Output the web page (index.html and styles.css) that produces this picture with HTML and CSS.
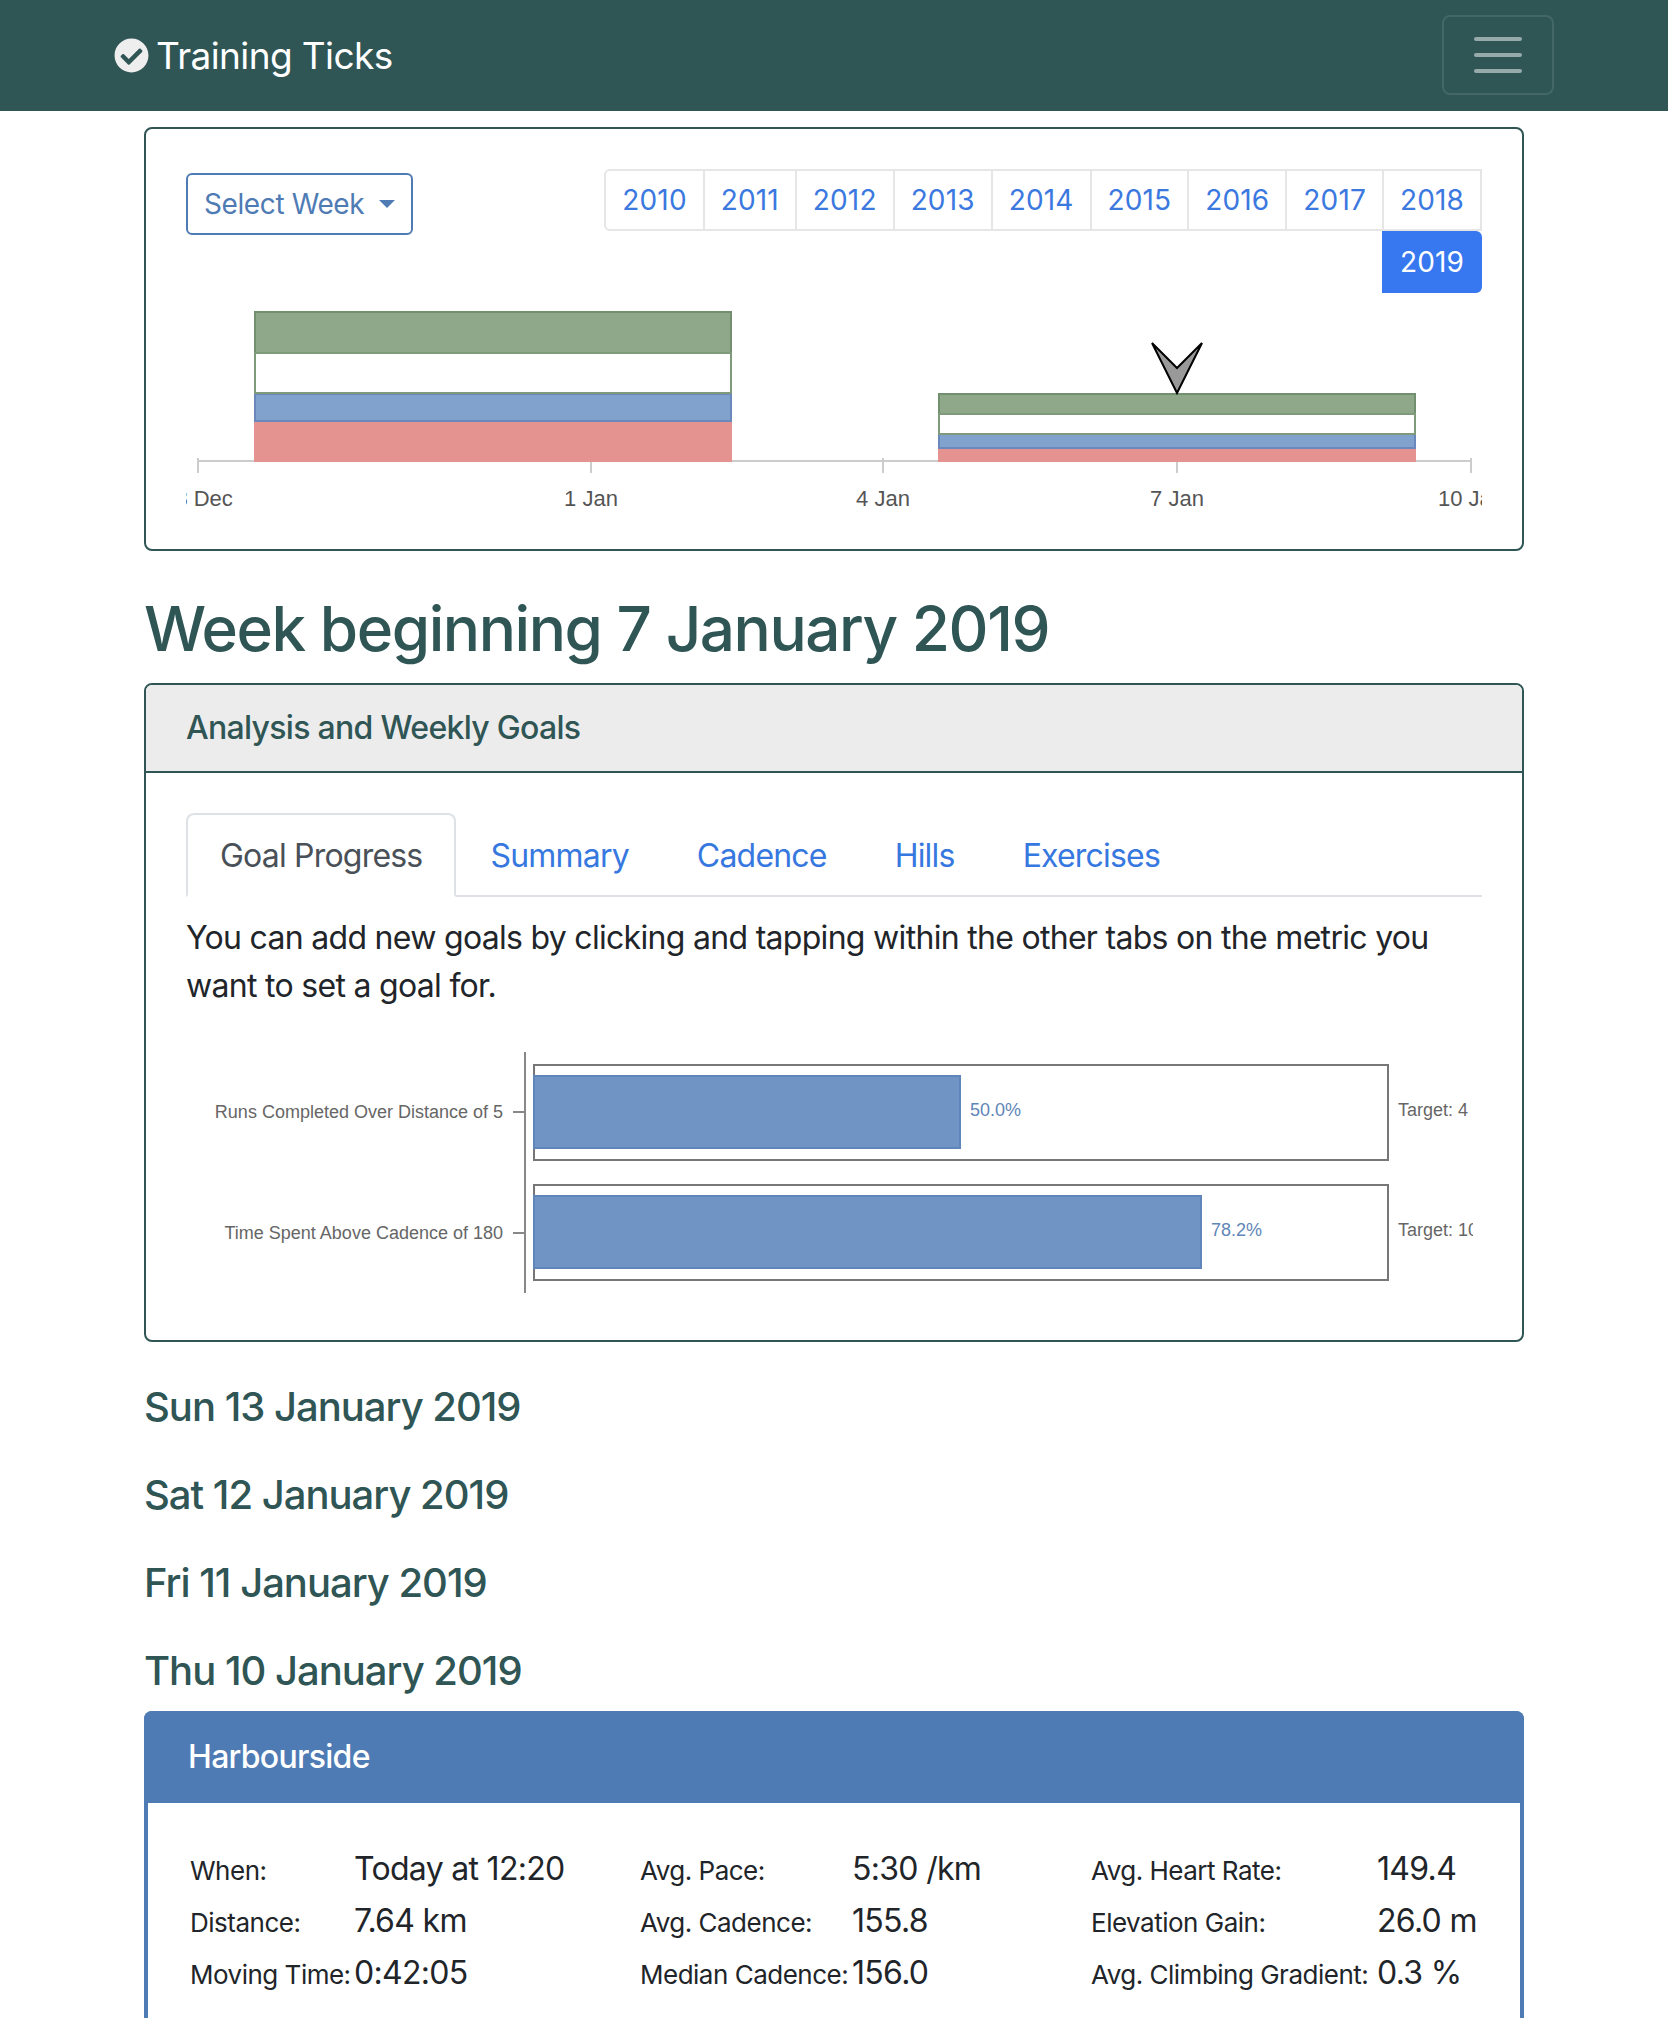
FILE: index.html
```html
<!DOCTYPE html>
<html lang="en">
<head>
  <meta charset="UTF-8">
  <meta name="viewport" content="width=device-width, initial-scale=1.0">
  <title>Training Ticks</title>
  <link rel="stylesheet" href="styles.css">
</head>
<body>

<nav class="navbar">
  <a class="brand" href="#">
    <svg class="brand-icon" viewBox="0 0 512 512"><path d="M504 256c0 136.967-111.033 248-248 248S8 392.967 8 256 119.033 8 256 8s248 111.033 248 248zM227.314 387.314l184-184c6.248-6.248 6.248-16.379 0-22.627l-22.627-22.627c-6.248-6.249-16.379-6.249-22.628 0L216 308.118l-70.059-70.059c-6.248-6.248-16.379-6.248-22.628 0l-22.627 22.627c-6.248 6.248-6.248 16.379 0 22.627l104 104c6.249 6.25 16.379 6.25 22.628.001z"/></svg>
    Training Ticks
  </a>
  <button class="toggler"><span></span><span></span><span></span></button>
</nav>

<div class="container">

  <div class="card week-card">
    <div class="week-controls">
      <button class="select-week">Select Week<i class="caret"></i></button>
      <div class="years">
        <a class="year first">2010</a>
        <a class="year">2011</a>
        <a class="year">2012</a>
        <a class="year">2013</a>
        <a class="year">2014</a>
        <a class="year">2015</a>
        <a class="year">2016</a>
        <a class="year">2017</a>
        <a class="year">2018</a>
        <a class="year active">2019</a>
      </div>
    </div>
    <svg class="week-chart" viewBox="186 293 1296 217">
      <g class="axis">
        <path d="M198 461H1471"/>
        <path d="M198 458V473M591 458V473M883 458V473M1177 458V473M1471 458V473"/>
      </g>
      <g class="bar-red"><rect x="255" y="422" width="476" height="39"/><rect x="939" y="449" width="476" height="12"/></g>
      <g class="bar-blue"><rect x="255" y="394" width="476" height="27"/><rect x="939" y="434" width="476" height="14"/></g>
      <g class="bar-green"><rect x="255" y="312" width="476" height="41"/><rect x="939" y="394" width="476" height="20"/></g>
      <rect class="bar-white" x="255" y="353" width="476" height="40"/>
      <rect class="bar-white" x="939" y="414" width="476" height="20"/>
      <path class="marker" d="M1152 343L1177 368L1202 343L1177 393Z"/>
      <g class="axis-labels">
        <text x="198" y="506">28 Dec</text>
        <text x="591" y="506">1 Jan</text>
        <text x="883" y="506">4 Jan</text>
        <text x="1177" y="506">7 Jan</text>
        <text x="1471" y="506">10 Jan</text>
      </g>
    </svg>
  </div>

  <h1 class="week-title">Week beginning 7 January 2019</h1>

  <div class="card">
    <div class="card-header">Analysis and Weekly Goals</div>
    <div class="card-body">
      <ul class="tabs">
        <li class="tab active">Goal Progress</li>
        <li class="tab">Summary</li>
        <li class="tab">Cadence</li>
        <li class="tab">Hills</li>
        <li class="tab">Exercises</li>
      </ul>
      <p class="goal-text">You can add new goals by clicking and tapping within the other tabs on the metric you want to set a goal for.</p>
      <svg class="goal-chart" viewBox="186 1042 1287 257">
        <path class="goal-axis" d="M525 1052V1293M513 1112H526M513 1233H526"/>
        <rect class="goal-box" x="534" y="1065" width="854" height="95"/>
        <rect class="goal-box" x="534" y="1185" width="854" height="95"/>
        <rect class="goal-fill" x="534" y="1076" width="426" height="72"/>
        <rect class="goal-fill" x="534" y="1196" width="667" height="72"/>
        <g class="goal-labels">
          <text x="503" y="1118">Runs Completed Over Distance of 5</text>
          <text x="503" y="1239">Time Spent Above Cadence of 180</text>
        </g>
        <g class="goal-percent">
          <text x="970" y="1116">50.0%</text>
          <text x="1211" y="1236">78.2%</text>
        </g>
        <g class="goal-target">
          <text x="1398" y="1116">Target: 4</text>
          <text x="1398" y="1236">Target: 10</text>
        </g>
      </svg>
    </div>
  </div>

  <h5 class="day first-day">Sun 13 January 2019</h5>
  <h5 class="day">Sat 12 January 2019</h5>
  <h5 class="day">Fri 11 January 2019</h5>
  <h5 class="day last-day">Thu 10 January 2019</h5>

  <div class="activity">
    <div class="activity-header">Harbourside</div>
    <div class="activity-body">
      <table class="stats stats-when">
        <tr><td class="label">When:</td><td class="value">Today at 12:20</td></tr>
        <tr><td class="label">Distance:</td><td class="value">7.64 km</td></tr>
        <tr><td class="label">Moving Time:</td><td class="value">0:42:05</td></tr>
      </table>
      <table class="stats stats-pace">
        <tr><td class="label">Avg. Pace:</td><td class="value">5:30 /km</td></tr>
        <tr><td class="label">Avg. Cadence:</td><td class="value">155.8</td></tr>
        <tr><td class="label">Median Cadence:</td><td class="value">156.0</td></tr>
      </table>
      <table class="stats stats-effort">
        <tr><td class="label">Avg. Heart Rate:</td><td class="value">149.4</td></tr>
        <tr><td class="label">Elevation Gain:</td><td class="value">26.0 m</td></tr>
        <tr><td class="label">Avg. Climbing Gradient:</td><td class="value">0.3 %</td></tr>
      </table>
    </div>
  </div>

</div>

</body>
</html>
```

FILE: styles.css
```css
html, body {
  margin: 0;
  padding: 0;
  height: 2018px;
  overflow: hidden;
}
body {
  font-family: Inter, "Noto Sans", sans-serif;
  font-size: 32px;
  line-height: 48px;
  letter-spacing: -0.7px;
  color: #212529;
  background-color: #fff;
}

/* navbar */
.navbar {
  display: flex;
  justify-content: space-between;
  align-items: center;
  height: 111px;
  padding: 0 114px;
  background-color: #2f5555;
}
.brand {
  display: flex;
  align-items: center;
  gap: 7px;
  font-size: 37px;
  letter-spacing: -0.6px;
  color: #fff;
  text-decoration: none;
}
.brand-icon {
  width: 35px;
  height: 35px;
  fill: #eee;
}
.toggler {
  display: flex;
  flex-direction: column;
  align-items: center;
  justify-content: center;
  gap: 12px;
  width: 112px;
  height: 80px;
  margin-top: -1px;
  padding: 0;
  background: none;
  border: 2px solid rgba(255, 255, 255, 0.1);
  border-radius: 8px;
}
.toggler span {
  width: 48px;
  height: 4px;
  border-radius: 2px;
  background-color: rgba(255, 255, 255, 0.5);
}

.container {
  width: 1380px;
  margin: 16px auto 0;
}

/* cards */
.card {
  border: 2px solid #2f5555;
  border-radius: 8px;
}
.week-card {
  padding: 40px 40px 39px;
}
.week-controls {
  display: flex;
  justify-content: space-between;
  align-items: flex-start;
}
.select-week {
  display: flex;
  align-items: center;
  height: 62px;
  margin-top: 4px;
  padding: 0 16px;
  font: inherit;
  font-size: 28px;
  letter-spacing: -0.4px;
  color: #4f7bb5;
  background: #fff;
  border: 2px solid #4f7bb5;
  border-radius: 6px;
}
.caret {
  margin-left: 15px;
  border-top: 8px solid #4f7bb5;
  border-left: 8px solid transparent;
  border-right: 8px solid transparent;
}
.years {
  display: flex;
  flex-wrap: wrap;
  justify-content: flex-end;
  width: 900px;
}
.year {
  height: 42px;
  margin-left: -2px;
  padding: 8px 16px;
  font-size: 28px;
  line-height: 42px;
  letter-spacing: 0.15px;
  color: #3b78e0;
  border: 2px solid #e6e6e6;
}
.year.first {
  margin-left: 0;
  border-radius: 6px 0 0 6px;
}
.year.active {
  color: #fff;
  background-color: #3778f0;
  border-color: #3778f0;
  border-radius: 0 6px 6px 0;
}

.week-chart {
  display: block;
  width: 1296px;
  height: 217px;
}
.axis path {
  fill: none;
  stroke: #ccc;
  stroke-width: 2;
}
.bar-green rect {
  fill: #8fa88a;
  stroke: #72906f;
  stroke-width: 2;
}
.bar-white {
  fill: #fff;
  stroke: #809a7c;
  stroke-width: 2;
}
.bar-blue rect {
  fill: #80a2cc;
  stroke: #6a88bb;
  stroke-width: 2;
}
.bar-red rect {
  fill: #e49390;
  stroke: #e49390;
  stroke-width: 2;
}
.marker {
  fill: #999;
  stroke: #000;
  stroke-width: 2;
}
.axis-labels text {
  font-family: "Liberation Sans", sans-serif;
  font-size: 22px;
  letter-spacing: 0;
  fill: #555;
  text-anchor: middle;
}

.week-title {
  margin: 39px 0 16px;
  font-size: 62px;
  line-height: 77px;
  font-weight: 500;
  letter-spacing: -1.45px;
  color: #2f5555;
}

.card-header {
  padding: 19px 40px;
  font-weight: 500;
  color: #2f5555;
  background-color: #ececec;
  border-bottom: 2px solid #2f5555;
  border-radius: 6px 6px 0 0;
}
.card-body {
  padding: 40px 40px 41px;
}

/* tabs */
.tabs {
  display: flex;
  margin: 0;
  padding: 0;
  list-style: none;
  border-bottom: 2px solid #dee2e6;
}
.tab {
  margin-bottom: -2px;
  padding: 17px 32px 15px;
  letter-spacing: -0.8px;
  color: #3778e0;
  border: 2px solid transparent;
}
.tab.active {
  color: #495057;
  background-color: #fff;
  border-color: #dee2e6 #dee2e6 #fff;
  border-radius: 8px 8px 0 0;
}
.goal-text {
  margin: 17px 0 32px;
}

.goal-chart {
  display: block;
  width: 1287px;
  height: 257px;
}
.goal-axis {
  fill: none;
  stroke: #888;
  stroke-width: 2;
}
.goal-box {
  fill: #fff;
  stroke: #777;
  stroke-width: 2;
}
.goal-fill {
  fill: #7095c4;
  stroke: #5f86ba;
  stroke-width: 2;
}
.goal-labels text,
.goal-percent text,
.goal-target text {
  font-family: "Liberation Sans", sans-serif;
  font-size: 18px;
  letter-spacing: 0;
}
.goal-labels text {
  fill: #666;
  text-anchor: end;
}
.goal-percent text {
  fill: #5f86b8;
}
.goal-target text {
  fill: #666;
}

/* days */
.day {
  margin: 0 0 40px;
  font-size: 40px;
  line-height: 48px;
  font-weight: 500;
  letter-spacing: -1px;
  color: #2f5555;
}
.first-day {
  margin-top: 41px;
}
.last-day {
  margin-bottom: 16px;
}

/* activity */
.activity {
  border: 4px solid #4f7bb5;
  border-bottom: 0;
  border-radius: 8px 8px 0 0;
}
.activity-header {
  margin: -4px -4px 0;
  padding: 22px 44px;
  font-weight: 500;
  color: #fff;
  background-color: #4f7bb5;
  border-radius: 8px 8px 0 0;
}
.activity-body {
  display: grid;
  grid-template-columns: 450px 451px 450px;
  padding: 42px 0 200px 42px;
}
.stats {
  justify-self: start;
  border-collapse: collapse;
}
.stats td {
  padding: 0;
  height: 52px;
  vertical-align: baseline;
}
.stats td.label {
  font-size: 26px;
  letter-spacing: -0.5px;
}
.stats-when td.label {
  min-width: 164px;
}
.stats-pace td.label {
  min-width: 212px;
}
.stats-effort td.label {
  min-width: 286px;
}
```
